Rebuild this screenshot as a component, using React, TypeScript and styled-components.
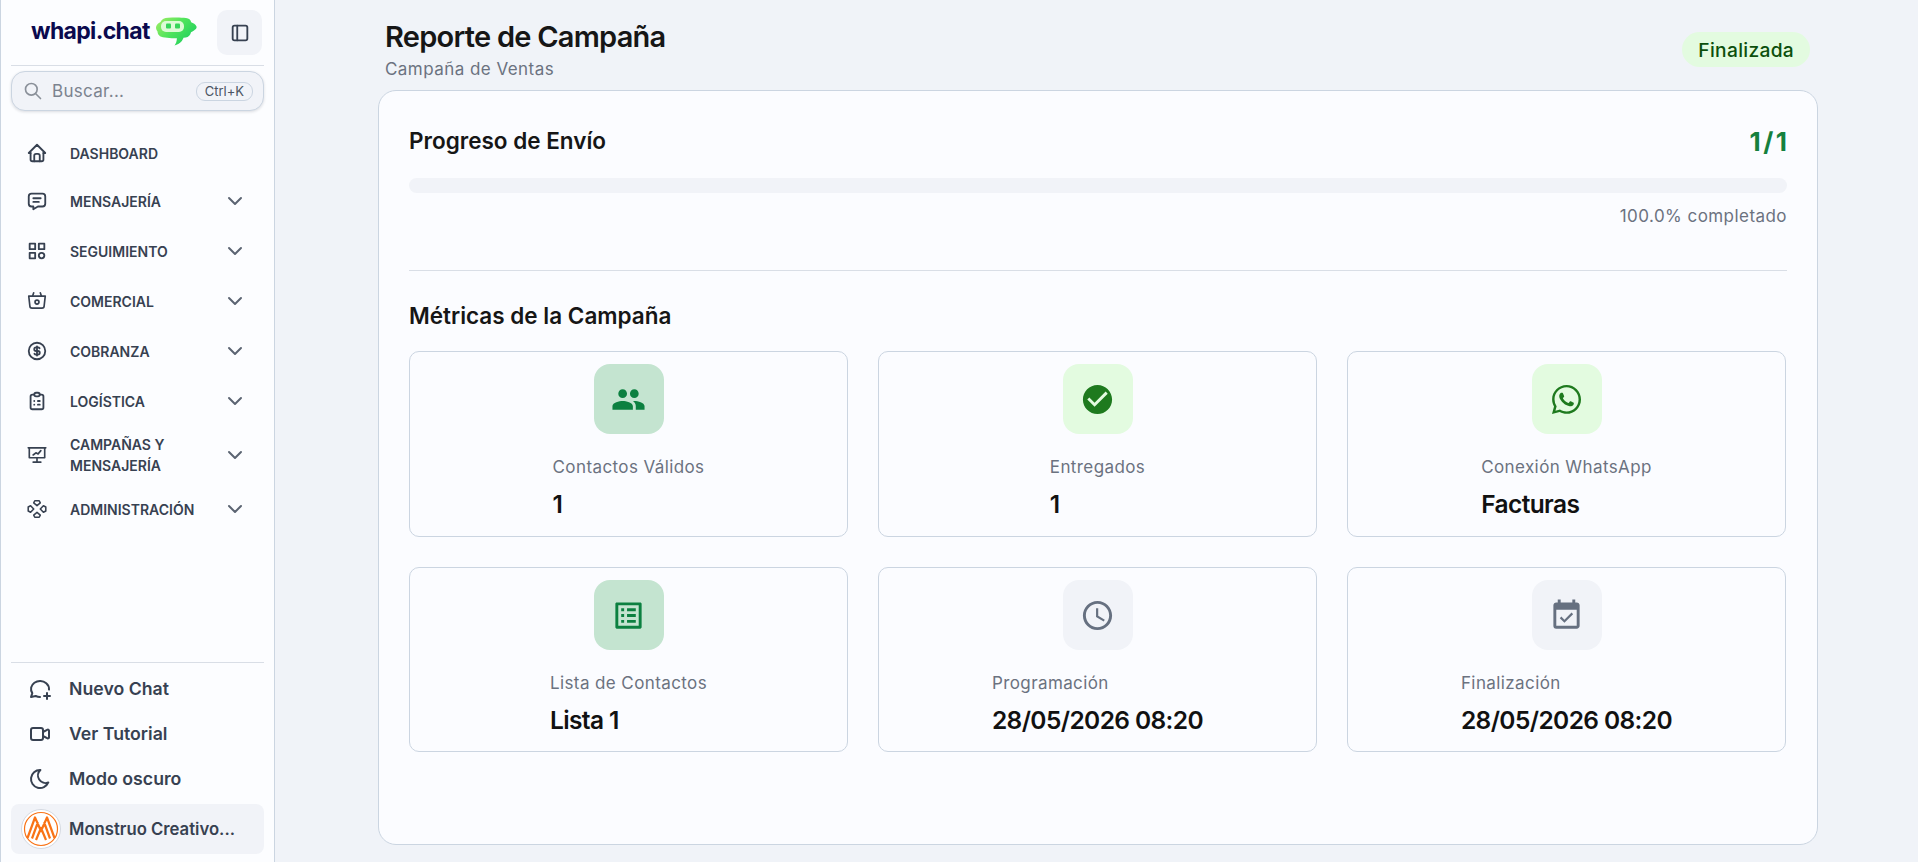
import styled, { createGlobalStyle } from 'styled-components';
import type { ReactNode } from 'react';
import {
  TbCategory,
  TbChevronDown,
  TbClipboardList,
  TbCoin,
  TbHome,
  TbLayoutSidebar,
  TbMessage,
  TbMessageCirclePlus,
  TbMoon,
  TbSearch,
  TbVideo,
} from 'react-icons/tb';
import {
  MdAccessTime,
  MdCheckCircle,
  MdEventAvailable,
  MdListAlt,
  MdPeople,
  MdWhatsapp,
} from 'react-icons/md';

const GlobalStyle = createGlobalStyle`
  * {
    box-sizing: border-box;
  }

  html,
  body {
    margin: 0;
    height: 100%;
    overflow: hidden;
    background: #f0f3f8;
    font-family: Inter, 'Noto Sans', sans-serif;
  }
`;

const Shell = styled.div`
  display: flex;
  height: 100vh;
`;

const Sidebar = styled.aside`
  width: 275px;
  flex-shrink: 0;
  display: flex;
  flex-direction: column;
  padding: 0 10px 8px;
  background: #fcfdff;
  border-left: 1px solid #cbd5e1;
  border-right: 1px solid #cbd5e1;
`;

const Brand = styled.div`
  height: 66px;
  display: flex;
  align-items: center;
  justify-content: space-between;
  padding: 0 2px 0 20px;
  border-bottom: 1px solid #d9dee6;
`;

const Logo = styled.div`
  display: flex;
  align-items: center;
  gap: 6px;
  margin-top: -3px;
`;

const LogoText = styled.span`
  font-size: 23px;
  font-weight: 700;
  letter-spacing: -0.65px;
  color: #0b0a4e;
`;

const ToggleButton = styled.button`
  width: 45px;
  height: 45px;
  display: flex;
  align-items: center;
  justify-content: center;
  padding: 0;
  border: 0;
  border-radius: 10px;
  background: #f1f3f8;
  color: #374151;
`;

const Search = styled.div`
  height: 40px;
  margin-top: 5px;
  display: flex;
  align-items: center;
  padding: 0 10px 0 11px;
  border: 1px solid #cbd5e1;
  border-radius: 14px;
  background: #f1f3f8;
  box-shadow: 0 1px 3px rgba(15, 23, 42, 0.14);
  color: #8a9099;
`;

const SearchText = styled.span`
  margin-left: 9px;
  flex: 1;
  font-size: 17px;
  letter-spacing: 0.3px;
  color: #7c838f;
`;

const Kbd = styled.span`
  height: 19px;
  padding: 0 8px;
  display: flex;
  align-items: center;
  border: 1px solid #cbd5e1;
  border-radius: 9px;
  font-size: 13px;
  color: #4b5563;
`;

const Nav = styled.nav`
  margin-top: 19px;
  display: flex;
  flex-direction: column;
`;

const NavRow = styled.div<{ $height: number }>`
  height: ${({ $height }) => $height}px;
  display: flex;
  align-items: center;
  padding: 0 17px 0 15px;
  color: #374151;
`;

const NavLabel = styled.span`
  margin-left: 22px;
  flex: 1;
  font-size: 14px;
  font-weight: 600;
  line-height: 21px;
  text-transform: uppercase;
`;

const Chevron = styled(TbChevronDown)`
  color: #5b6472;
`;

const Footer = styled.div`
  margin-top: auto;
  border-top: 1px solid #d9dee6;
  padding-top: 3px;
`;

const FooterRow = styled.div`
  height: 45px;
  display: flex;
  align-items: center;
  gap: 17px;
  padding-left: 17px;
  font-size: 17.7px;
  font-weight: 600;
  color: #374151;
`;

const UserRow = styled.div`
  height: 50px;
  margin-top: 3px;
  display: flex;
  align-items: center;
  gap: 8px;
  padding-left: 10px;
  border-radius: 8px;
  background: #f1f3f8;
  font-size: 16.7px;
  font-weight: 600;
  color: #374151;
`;

const Main = styled.main`
  flex: 1;
  min-width: 0;
  display: flex;
  flex-direction: column;
  padding: 18px 100px 17px 103px;
`;

const Header = styled.header`
  display: flex;
  align-items: center;
  justify-content: space-between;
  padding: 0 8px 0 7px;
  margin-bottom: 9px;
`;

const Title = styled.h1`
  margin: 0;
  font-size: 29px;
  font-weight: 600;
  line-height: 38px;
  letter-spacing: -0.75px;
  color: #161616;
`;

const Subtitle = styled.p`
  margin: 1px 0 0;
  font-size: 17px;
  line-height: 24px;
  letter-spacing: 0.45px;
  color: #6b7280;
`;

const StatusBadge = styled.span`
  height: 35px;
  padding: 0 16px;
  display: flex;
  align-items: center;
  border-radius: 18px;
  background: #e3fbe0;
  font-size: 19.2px;
  font-weight: 500;
  letter-spacing: 0.3px;
  color: #0c4f0c;
`;

const ReportCard = styled.section`
  flex: 1;
  padding: 29px 30px 28px;
  border: 1px solid #cbd5e1;
  border-radius: 18px;
  background: #fbfcff;
`;

const ProgressHead = styled.div`
  height: 42px;
  display: flex;
  align-items: center;
  justify-content: space-between;
`;

const SectionTitle = styled.h2`
  margin: 0;
  font-size: 22.5px;
  font-weight: 600;
  line-height: 28px;
  color: #161616;
`;

const ProgressCount = styled.span`
  font-size: 26px;
  font-weight: 700;
  letter-spacing: 2.5px;
  margin-right: -2.5px;
  color: #15803d;
`;

const ProgressTrack = styled.div`
  height: 15px;
  margin-top: 16px;
  border-radius: 8px;
  background: #f1f3f8;
`;

const ProgressText = styled.p`
  margin: 11px 0 0;
  font-size: 17px;
  line-height: 24px;
  letter-spacing: 0.45px;
  text-align: right;
  color: #6b7280;
`;

const Divider = styled.hr`
  margin: 42px 0 31px;
  border: 0;
  border-top: 1px solid #d9dee6;
`;

const MetricGrid = styled.div`
  margin: 21px 1px 0 0;
  display: grid;
  grid-template-columns: repeat(3, 1fr);
  grid-template-rows: 186px 185px;
  column-gap: 30px;
  row-gap: 30px;
`;

const MetricCard = styled.div`
  padding: 12px;
  display: flex;
  flex-direction: column;
  align-items: center;
  border: 1px solid #cbd5e1;
  border-radius: 10px;
`;

const tones = {
  teal: { bg: '#c4e4d0', fg: '#0c8040' },
  green: { bg: '#e3fbe0', fg: '#1e7a1e' },
  gray: { bg: '#f1f3f8', fg: '#667080' },
};

type Tone = keyof typeof tones;

const MetricIcon = styled.div<{ $tone: Tone }>`
  width: 70px;
  height: 70px;
  display: flex;
  align-items: center;
  justify-content: center;
  border-radius: 16px;
  background: ${({ $tone }) => tones[$tone].bg};
  color: ${({ $tone }) => tones[$tone].fg};
`;

const MetricBody = styled.div`
  margin-top: 21px;
`;

const MetricLabel = styled.div`
  font-size: 17px;
  line-height: 24px;
  letter-spacing: 0.4px;
  color: #6b7280;
`;

const MetricValue = styled.div`
  margin-top: 7px;
  font-size: 24.5px;
  font-weight: 600;
  line-height: 36px;
  letter-spacing: -0.6px;
  color: #111111;
`;

const BasketIcon = () => (
  <svg width="22" height="22" viewBox="-1 -1 20 20" fill="none" stroke="currentColor" strokeWidth="1.5" strokeLinecap="round" strokeLinejoin="round">
    <path d="M5 4.500 6 1.500M13 4.500 12 1.500" />
    <path d="M1.500 4.500h15l-1 9a2 2 0 0 1-2 2h-9a2 2 0 0 1-2-2z" />
    <circle cx="9" cy="10" r="1.800" />
  </svg>
);

const MonitorIcon = () => (
  <svg width="22" height="22" viewBox="-1 -1 20 20" fill="none" stroke="currentColor" strokeWidth="1.500" strokeLinecap="round" strokeLinejoin="round">
    <path d="M1 2.500h16M2 2.500v9h14v-9M9 11.500v4M5.500 15.500h7" />
    <path d="M5.500 9l2.500-2 2 1 2.500-3" />
  </svg>
);

const NodesIcon = () => (
  <svg width="22" height="22" viewBox="-1 -1 20 20" fill="none" stroke="currentColor" strokeWidth="1.400" strokeLinejoin="round">
    <path d="M7 1.500h4l1 2-3 2.500-3-2.500z" />
    <path d="M7 16.500h4l1-2-3-2.500-3 2.500z" />
    <path d="M1 7.200 3.200 6l2.800 3-2.800 3L1 10.800z" />
    <path d="M17 7.200 14.800 6 12 9l2.800 3 2.200-1.200z" />
  </svg>
);

const BrandMark = () => (
  <svg width="41" height="29" viewBox="0 0 41 29">
    <defs>
      <linearGradient id="brandGradient" x1="0" y1="0" x2="1" y2="0.7">
        <stop offset="0" stopColor="#a4ee66" />
        <stop offset="0.5" stopColor="#4fe45c" />
        <stop offset="1" stopColor="#1fcf5e" />
      </linearGradient>
    </defs>
    <path
      d="M4.500 5C6 2 8.500 1 12 .8 18 .3 25 .3 30 1c3 .4 4.600 1.800 5.200 4.200 2 .6 4.500 2.300 5.300 4.300.4 1-.2 2-1 2.800-1.500 1.300-2.800 2.300-4.500 3-.6 3-2.500 4.800-5.200 5.200l-2.300.3c-.9 2.500-3 6.200-9 7.700 1.400-1.800 2.300-4 2.400-7.300-3.400.2-8.400 0-11.900-.6C3 20.300 1.700 17 1.500 14.500 1 14 0 12.200 0 10.800 0 8.400 2.500 5.800 4.500 5z"
      fill="url(#brandGradient)"
    />
    <rect x="5" y="4" width="23" height="11" rx="5" fill="#dcfbd6" />
    <rect x="10" y="6.500" width="5" height="5" rx="1" fill="#35d65a" />
    <rect x="19" y="6.500" width="5" height="5" rx="1" fill="#35d65a" />
  </svg>
);

const AvatarMark = () => (
  <svg width="40" height="40" viewBox="0 0 40 40" fill="none">
    <circle cx="20" cy="20" r="19.500" fill="#ffffff" stroke="#d4d9e1" />
    <circle cx="20" cy="20" r="16.500" stroke="#f97316" strokeWidth="1.200" />
    <path
      d="M6.500 29 14 8.500 20 22l6-13.500L33.500 29M11 29.500 17 13M23 13l6 16.500M15 31l5-12 5 12"
      stroke="#f97316"
      strokeWidth="2.200"
      strokeLinejoin="round"
    />
  </svg>
);

type NavEntry = { label: ReactNode; icon: ReactNode; height: number; chevron: boolean };

const navEntries: NavEntry[] = [
  { label: 'Dashboard', icon: <TbHome size={22} />, height: 46, chevron: false },
  { label: 'Mensajería', icon: <TbMessage size={22} />, height: 50, chevron: true },
  { label: 'Seguimiento', icon: <TbCategory size={22} />, height: 50, chevron: true },
  { label: 'Comercial', icon: <BasketIcon />, height: 50, chevron: true },
  { label: 'Cobranza', icon: <TbCoin size={22} />, height: 50, chevron: true },
  { label: 'Logística', icon: <TbClipboardList size={22} />, height: 50, chevron: true },
  { label: <>Campañas y<br />Mensajería</>, icon: <MonitorIcon />, height: 58, chevron: true },
  { label: 'Administración', icon: <NodesIcon />, height: 50, chevron: true },
];

const metrics: { label: string; value: string; tone: Tone; icon: ReactNode }[] = [
  { label: 'Contactos Válidos', value: '1', tone: 'teal', icon: <MdPeople size={35} /> },
  { label: 'Entregados', value: '1', tone: 'green', icon: <MdCheckCircle size={35} /> },
  { label: 'Conexión WhatsApp', value: 'Facturas', tone: 'green', icon: <MdWhatsapp size={35} /> },
  { label: 'Lista de Contactos', value: 'Lista 1', tone: 'teal', icon: <MdListAlt size={35} /> },
  { label: 'Programación', value: '28/05/2026 08:20', tone: 'gray', icon: <MdAccessTime size={35} /> },
  { label: 'Finalización', value: '28/05/2026 08:20', tone: 'gray', icon: <MdEventAvailable size={35} /> },
];

export default function App() {
  return (
    <>
      <GlobalStyle />
      <Shell>
        <Sidebar>
          <Brand>
            <Logo>
              <LogoText>whapi.chat</LogoText>
              <BrandMark />
            </Logo>
            <ToggleButton aria-label="Contraer menú">
              <TbLayoutSidebar size={22} />
            </ToggleButton>
          </Brand>
          <Search>
            <TbSearch size={20} />
            <SearchText>Buscar...</SearchText>
            <Kbd>Ctrl+K</Kbd>
          </Search>
          <Nav>
            {navEntries.map((entry, index) => (
              <NavRow key={index} $height={entry.height}>
                {entry.icon}
                <NavLabel>{entry.label}</NavLabel>
                {entry.chevron && <Chevron size={24} />}
              </NavRow>
            ))}
          </Nav>
          <Footer>
            <FooterRow><TbMessageCirclePlus size={24} />Nuevo Chat</FooterRow>
            <FooterRow><TbVideo size={24} />Ver Tutorial</FooterRow>
            <FooterRow><TbMoon size={24} />Modo oscuro</FooterRow>
            <UserRow><AvatarMark />Monstruo Creativo...</UserRow>
          </Footer>
        </Sidebar>
        <Main>
          <Header>
            <div>
              <Title>Reporte de Campaña</Title>
              <Subtitle>Campaña de Ventas</Subtitle>
            </div>
            <StatusBadge>Finalizada</StatusBadge>
          </Header>
          <ReportCard>
            <ProgressHead>
              <SectionTitle>Progreso de Envío</SectionTitle>
              <ProgressCount>1/1</ProgressCount>
            </ProgressHead>
            <ProgressTrack />
            <ProgressText>100.0% completado</ProgressText>
            <Divider />
            <SectionTitle>Métricas de la Campaña</SectionTitle>
            <MetricGrid>
              {metrics.map((metric) => (
                <MetricCard key={metric.label}>
                  <MetricIcon $tone={metric.tone}>{metric.icon}</MetricIcon>
                  <MetricBody>
                    <MetricLabel>{metric.label}</MetricLabel>
                    <MetricValue>{metric.value}</MetricValue>
                  </MetricBody>
                </MetricCard>
              ))}
            </MetricGrid>
          </ReportCard>
        </Main>
      </Shell>
    </>
  );
}
